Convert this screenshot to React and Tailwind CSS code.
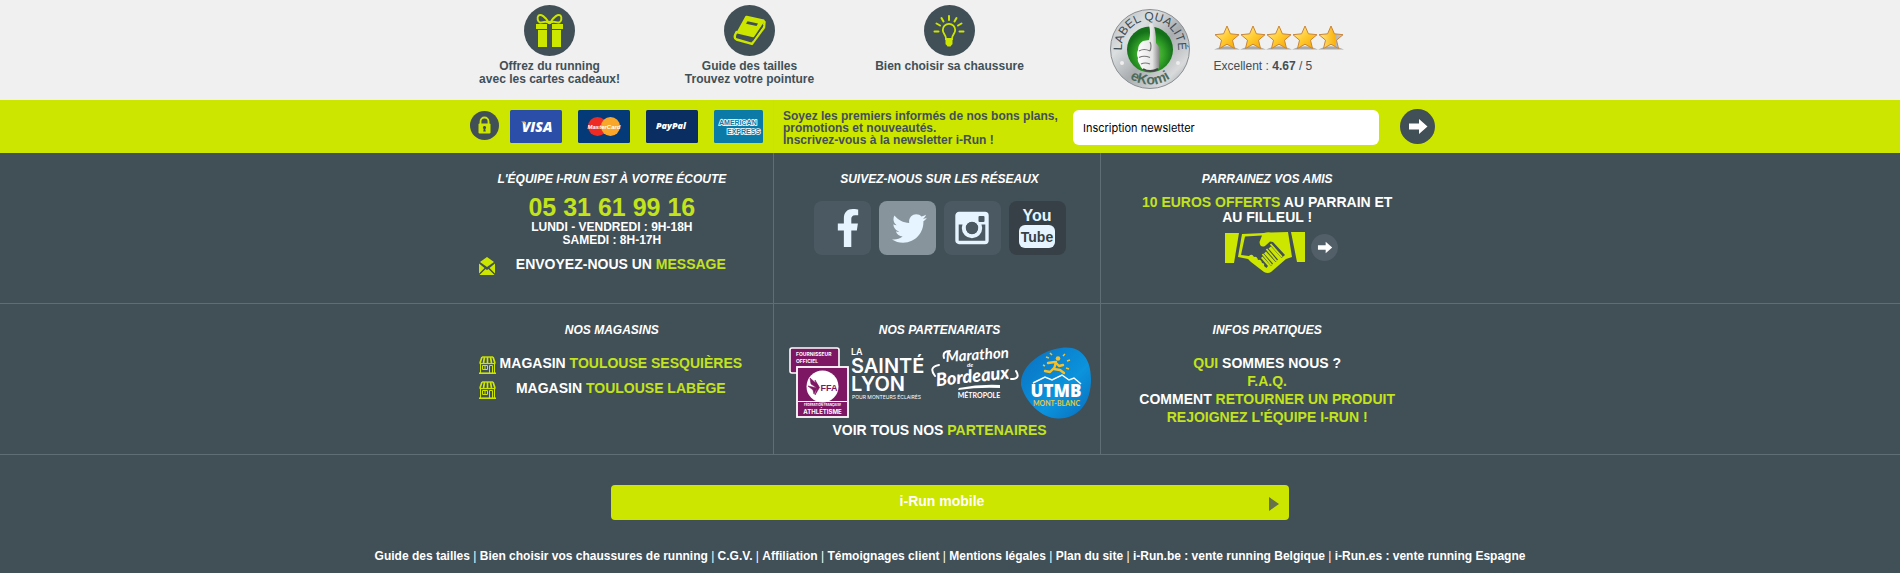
import React from "react";
import { FaFacebookF, FaTwitter } from "react-icons/fa";

const LIME = "#cde600";
const SLATE = "#414f57";

function GiftIcon() {
  return (
    <svg viewBox="0 0 51 51" className="size-[51px]" aria-hidden="true">
      <circle cx="25.500" cy="25.500" r="25.500" fill={SLATE} />
      <g fill={LIME}>
        <path d="M12 19h11v5H12zM28 19h11v5H28zM14 25h9v17h-9zM28 25h9v17h-9z" />
      </g>
      <g fill="none" stroke={LIME} strokeWidth="2" strokeLinejoin="round">
        <path d="M25 18C21 11 17 9 14.500 10.500C12.500 13 14 17 16 17.500C19 18 21 15 25 18Z" />
        <path d="M26 18C30 11 34 9 36.500 10.500C38.500 13 37 17 35 17.500C32 18 30 15 26 18Z" />
      </g>
      <circle cx="25.500" cy="17.500" r="1.800" fill={LIME} />
    </svg>
  );
}

function BookIcon() {
  return (
    <svg viewBox="0 0 51 51" className="size-[51px]" aria-hidden="true">
      <circle cx="25.500" cy="25.500" r="25.500" fill={SLATE} />
      <path d="M21.500 11Q22 10.500 23 10.800L40 14.500Q41 15 40.600 16L31 31.500Q30 32.500 29 32.300L12 28.300Z" fill={LIME} />
      <path d="M23.500 16.200L34 18.500L32.500 21L22 18.700Z" fill={SLATE} />
      <path d="M12.500 27Q9 33 12.500 34.500L28 38.800L40 22.500L40.500 17" fill="none" stroke={LIME} strokeWidth="2.400" strokeLinejoin="round" strokeLinecap="round" />
      <path d="M14 31.500L28.500 35.500L39 20" fill="none" stroke={SLATE} strokeWidth="1.400" />
    </svg>
  );
}

function BulbIcon() {
  return (
    <svg viewBox="0 0 51 51" className="size-[51px]" aria-hidden="true">
      <circle cx="25.500" cy="25.500" r="25.500" fill={SLATE} />
      <path d="M22 34C22 29 18.800 29 18.800 25A6.200 6.200 0 0 1 31.200 25C31.200 29 28 29 28 34Z" fill="none" stroke={LIME} strokeWidth="1.800" />
      <path d="M21.500 34h7v4.500q0 1-1 1.500l-1 1.500h-3l-1-1.500q-1-.5-1-1.500z" fill={LIME} />
      <path d="M25 11v4M17.500 13l2 3.500M32.500 13l-2 3.500M12.500 18.500l3.500 2M37.500 18.500l-3.500 2M10.500 26.500h4M35.500 26.500h4" stroke={LIME} strokeWidth="2" strokeLinecap="round" />
    </svg>
  );
}

function EkomiSeal() {
  return (
    <svg viewBox="0 0 80 80" className="size-20 shrink-0" role="img" aria-label="Label Qualité eKomi">
      <defs>
        <linearGradient id="sealRing" x1="0" y1="0" x2="1" y2="1">
          <stop offset="0" stopColor="#b3b7ba" />
          <stop offset=".3" stopColor="#dcdfe0" />
          <stop offset=".55" stopColor="#a9adb0" />
          <stop offset=".8" stopColor="#d8dadb" />
          <stop offset="1" stopColor="#8f9498" />
        </linearGradient>
        <radialGradient id="sealCore" cx=".5" cy=".6">
          <stop offset="0" stopColor="#7fd45c" />
          <stop offset=".65" stopColor="#2f9e25" />
          <stop offset="1" stopColor="#15701a" />
        </radialGradient>
        <linearGradient id="thumb" x1="0" x2="1">
          <stop offset="0" stopColor="#ffffff" />
          <stop offset=".7" stopColor="#e4e4e4" />
          <stop offset="1" stopColor="#8b8b8b" />
        </linearGradient>
        <path id="sealTop" d="M15 52A28 28 0 1 1 65 52" />
        <path id="sealBottom" d="M8 56A36 36 0 0 0 72 56" />
      </defs>
      <circle cx="40" cy="40" r="39.500" fill="url(#sealRing)" stroke="#8a8f92" strokeWidth="1" />
      <circle cx="40" cy="40.500" r="23" fill="url(#sealCore)" />
      <path d="M39 16Q40 13 43 15Q46 20 46 34L49 38V59Q44 63 38 62Q31 61 30 56Q27 52 28 49Q26 45 28 41Q28 35 33 32L39 31Q41 24 39 16Z" fill="url(#thumb)" />
      <path d="M29 42Q34 39 40 42M29 48.500Q34 46 40 48.500M31 55Q35 53 40 55M40 33Q42 37 40 42" fill="none" stroke="#777" strokeWidth="1.200" />
      <path d="M33 60Q40 64 48 60" stroke="#454545" strokeWidth="2" fill="none" />
      <text fontFamily="Liberation Sans, sans-serif" fontSize="12" fill="#3d4c54" textAnchor="middle">
        <textPath href="#sealTop" startOffset="50%">LABEL QUALITÉ</textPath>
      </text>
      <text fontFamily="Liberation Sans, sans-serif" fontWeight="700" fontSize="14" fill="#4c6b5c" textAnchor="middle">
        <textPath href="#sealBottom" startOffset="50%">eKomi</textPath>
      </text>
      <circle cx="12" cy="54" r="2" fill="#eee" />
      <circle cx="68" cy="54" r="2" fill="#eee" />
    </svg>
  );
}

const STAR = "M13 1L16.400 8.800L25 9.700L18.500 15.200L20.500 23.500L13 19.200L5.500 23.500L7.500 15.200L1 9.700L9.600 8.800Z";

function Stars() {
  return (
    <svg viewBox="0 0 130 25" className="h-[25px] w-[130px]" role="img" aria-label="4.67 sur 5">
      <defs>
        <linearGradient id="gold" x1="0" y1="0" x2="1" y2="1">
          <stop offset="0" stopColor="#fff0a8" />
          <stop offset=".5" stopColor="#ffcb2e" />
          <stop offset="1" stopColor="#f6a000" />
        </linearGradient>
        <linearGradient id="goldPart">
          <stop offset="0" stopColor="#ffe88a" />
          <stop offset=".66" stopColor="#fbb40c" />
          <stop offset=".67" stopColor="#b5b5b5" />
          <stop offset="1" stopColor="#c8c8c8" />
        </linearGradient>
      </defs>
      {[0, 1, 2, 3, 4].map((i) => (
        <g key={i} transform={`translate(${i * 26} 0)`}>
          <path d="M0 24.500Q13 18 26 24.500Z" fill="#a9a9a9" />
          <path d={STAR} fill={i === 4 ? "url(#goldPart)" : "url(#gold)"} stroke="#c9853a" strokeWidth="1" strokeLinejoin="round" />
        </g>
      ))}
    </svg>
  );
}

function ArrowDisc({ disc, className }) {
  return (
    <svg viewBox="0 0 35 35" className={className} aria-hidden="true">
      <circle cx="17.500" cy="17.500" r="17.500" fill={disc} />
      <path d="M9 14.500h10v-4.500l8.500 7.500l-8.500 7.500v-4.500H9z" fill="#fff" />
    </svg>
  );
}

function LockIcon() {
  return (
    <svg viewBox="0 0 29 29" className="mt-px size-[29px]" aria-hidden="true">
      <circle cx="14.500" cy="14.500" r="14.500" fill={SLATE} />
      <rect x="8.500" y="12.500" width="12" height="10" rx="1" fill={LIME} />
      <path d="M10.500 13v-2.500a4 4 0 0 1 8 0V13" fill="none" stroke={LIME} strokeWidth="1.800" />
      <path d="M14.500 15a1.600 1.600 0 0 1 .8 3l.5 2.500h-2.600l.5-2.500a1.600 1.600 0 0 1 .8-3z" fill={SLATE} />
    </svg>
  );
}

const logoFont = "Liberation Sans, sans-serif";

function PaymentLogos() {
  return (
    <div className="flex gap-4">
      <svg viewBox="0 0 52 33" className="h-[33px] w-[52px]" role="img" aria-label="Visa">
        <rect width="52" height="33" rx="1.500" fill="#2b4fa8" />
        <text x="27" y="22" textAnchor="middle" fontFamily="Open Sans, sans-serif" fontWeight="800" fontStyle="italic" fontSize="14" fill="#fff">VISA</text>
        <path d="M11 11.500h4l1.500 4.500Q14 12.500 11 11.500z" fill="#f5b95a" />
      </svg>
      <svg viewBox="0 0 52 33" className="h-[33px] w-[52px]" role="img" aria-label="MasterCard">
        <rect width="52" height="33" rx="1.500" fill="#053a78" />
        <circle cx="19.500" cy="16.500" r="9.500" fill="#ee2a24" />
        <circle cx="32.500" cy="16.500" r="9.500" fill="#f9a72b" />
        <text x="26" y="19" textAnchor="middle" fontFamily={logoFont} fontWeight="700" fontStyle="italic" fontSize="6" fill="#fff">MasterCard</text>
      </svg>
      <svg viewBox="0 0 52 33" className="h-[33px] w-[52px]" role="img" aria-label="PayPal">
        <rect width="52" height="33" rx="1.500" fill="#0a2d62" />
        <text x="25" y="19" textAnchor="middle" fontFamily="Open Sans, sans-serif" fontWeight="800" fontStyle="italic" fontSize="9" fill="#fff">PayPal</text>
      </svg>
      <svg viewBox="0 0 49 33" className="h-[33px] w-[49px]" role="img" aria-label="American Express">
        <rect width="49" height="33" rx="1.500" fill="#0b7aa6" />
        <g fontFamily={logoFont} fontWeight="700" fontSize="7" fill="#0b7aa6" stroke="#fff" strokeWidth="1.600" paintOrder="stroke">
          <text x="5" y="15">AMERICAN</text>
          <text x="13" y="24">EXPRESS</text>
        </g>
      </svg>
    </div>
  );
}

function EnvelopeIcon() {
  return (
    <svg viewBox="0 0 16 18" className="h-[18px] w-4" aria-hidden="true">
      <path d="M8 0L15 5L8 10L1 5Z" fill={LIME} />
      <path d="M0 6.500L5.500 11L0 16.500zM16 6.500L10.500 11L16 16.500zM.5 18L6.500 12L8 13L9.500 12L15.500 18z" fill={LIME} />
    </svg>
  );
}

function ShopIcon() {
  return (
    <svg viewBox="0 0 17 18" className="h-[18px] w-[17px]" aria-hidden="true" fill="none" stroke={LIME}>
      <path d="M3 1h11" strokeWidth="1.400" />
      <path d="M3 1L1 7M5.500 1L4.500 7M8.500 1V7M11.500 1L12.500 7M14 1L16 7" strokeWidth="1.700" />
      <path d="M.5 7.500h16" strokeWidth="1.200" />
      <path d="M1.500 8v9M15.500 8v9M3.500 9.500h5v4h-5zM6 9.500v4M10.500 17V9.500h3V17" strokeWidth="1" />
      <path d="M0 17.200h17" strokeWidth="1.600" />
    </svg>
  );
}

function HandshakeIcon() {
  return (
    <svg viewBox="0 0 80 41" className="h-[41px] w-20" aria-hidden="true">
      <path d="M0 1H14L9 31H0zM66 0H80V30H72Z" fill={LIME} />
      <path d="M17 2L39 1Q42 0 46 .5L63 0L67 25L61 27L46 40Q43 42 39 40L26 30L23 27L13 25Z" fill={LIME} />
      <path d="M20 4.500L37 3.500L34.500 10Q35 16 40 14L45 9.500L48 10L60 23L56.500 26L46 14.500L43.500 16.500L53 27.500L50.500 30L41 19.500L39 21.500L48 31.500L46 34L37.500 24.500L36 26L43 34L41.500 36L39 34Q40 31 37 31Q36 27 33 28Q32 24 29 25Q27 21 24 24L16 23Z" fill={SLATE} />
      <path d="M45.500 12L57 25M41.500 17L51.500 29M37.500 22L46.500 33" stroke={LIME} strokeWidth="1.800" />
    </svg>
  );
}

function InstagramIcon() {
  return (
    <svg viewBox="0 0 34 34" className="size-[34px]" aria-hidden="true">
      <rect x="2" y="2.500" width="30" height="29" rx="2" fill="none" stroke="#e6f4ff" strokeWidth="3.400" />
      <path d="M1 2.500h32v11h-9a8.500 8.500 0 0 0-14 0H1z" fill="#e6f4ff" />
      <circle cx="17" cy="17" r="8.200" fill="none" stroke="#e6f4ff" strokeWidth="4" />
      <circle cx="17" cy="17" r="6" fill="#4b5962" />
      <rect x="23.500" y="5" width="6" height="6" rx="1" fill="#4b5962" />
    </svg>
  );
}

function YoutubeIcon() {
  return (
    <svg viewBox="0 0 38 42" className="h-[42px] w-[38px]" aria-hidden="true">
      <rect x="1" y="18" width="36" height="23" rx="6" fill="#e6f4ff" />
      <g fontFamily={logoFont} fontWeight="700" textAnchor="middle">
        <text x="19" y="14" fontSize="16" fill="#e6f4ff">You</text>
        <text x="19" y="35" fontSize="14" fill="#364046">Tube</text>
      </g>
    </svg>
  );
}

function FfaLogo() {
  return (
    <svg viewBox="0 0 60 71" className="h-[71px] w-[60px]" role="img" aria-label="Fédération Française d'Athlétisme">
      <rect x="1" y="1" width="49" height="25" rx="2" fill="#7d1663" stroke="#fff" strokeWidth="1.600" />
      <g fontFamily="Inter, sans-serif" fontWeight="700" fontSize="5" fill="#fff">
        <text x="7" y="9">FOURNISSEUR</text>
        <text x="7" y="16">OFFICIEL</text>
      </g>
      <rect x="8" y="20" width="51" height="50" fill="#7d1663" stroke="#fff" strokeWidth="1.800" />
      <circle cx="33.500" cy="39.500" r="16" fill="#fff" />
      <path d="M21 31L29 38L28 41L22 37zM19 39L28 41L25 47L24 43zM26 33L30.500 40.500L26 48L28 41z" fill="#7d1663" stroke="#7d1663" strokeWidth=".6" />
      <text x="40" y="44" textAnchor="middle" fontFamily={logoFont} fontWeight="700" fontSize="9" fill="#7d1663">FFA</text>
      <path d="M9 54.500h49" stroke="#fff" strokeWidth="1" />
      <g fontFamily="Inter, sans-serif" fontWeight="700" fill="#fff" textAnchor="middle">
        <text x="33.500" y="59" fontSize="3">FÉDÉRATION FRANÇAISE</text>
        <text x="33.500" y="67" fontSize="6">ATHLÉTISME</text>
      </g>
    </svg>
  );
}

function SainteLyonLogo() {
  return (
    <svg viewBox="0 0 78 54" className="h-[54px] w-[78px] overflow-visible" role="img" aria-label="La SaintéLyon">
      <g fontFamily="Inter, sans-serif" fontWeight="600" fill="#fff">
        <text x="0" y="8" fontSize="9">LA</text>
        <text x="0" y="26" fontSize="20">SAINTÉ</text>
        <text x="0" y="44" fontSize="20">LYON</text>
        <text x="1" y="52" fontSize="5" fontWeight="400">POUR MONTEURS ÉCLAIRÉS</text>
      </g>
    </svg>
  );
}

function BordeauxLogo() {
  return (
    <svg viewBox="0 0 88 52" className="h-[52px] w-[88px] overflow-visible" role="img" aria-label="Marathon de Bordeaux Métropole">
      <g fontFamily="Lato, sans-serif" fontWeight="700" fontStyle="italic" fill="#fff">
        <text x="15" y="13" fontSize="15" transform="rotate(-4 45 13)">Marathon</text>
        <text x="36" y="20" fontSize="6">de</text>
        <text x="5" y="35" fontSize="18" fontWeight="900" transform="rotate(-6 45 32)">Bordeaux</text>
      </g>
      <path d="M4 29Q-3 20 8 18M13 11Q11 4 19 4M80 32Q90 32 85 24" fill="none" stroke="#fff" strokeWidth="2" strokeLinecap="round" />
      <path d="M28 41Q48 37 69 38V41Q48 40 27 43Z" fill="#fff" />
      <text x="48" y="51" textAnchor="middle" fontFamily="Lato, sans-serif" fontWeight="700" fontSize="7" fill="#fff">MÉTROPOLE</text>
    </svg>
  );
}

function UtmbLogo() {
  return (
    <svg viewBox="0 0 70 72" className="h-[72px] w-[70px]" role="img" aria-label="UTMB Mont-Blanc">
      <defs>
        <linearGradient id="utmb" x1="0" x2="1" y1="0" y2="1">
          <stop offset="0" stopColor="#0a6fc0" />
          <stop offset=".6" stopColor="#0b93dc" />
          <stop offset="1" stopColor="#0a6cbb" />
        </linearGradient>
      </defs>
      <path d="M40 1C60-2 70 12 70 32C70 56 58 71 38 71.500C20 72 4 54 0 38C-1 18 22 3 40 1Z" fill="url(#utmb)" />
      <path d="M12 36L24 30L31 33L41 28L48 33L53 31L60 37" fill="none" stroke="#fff" strokeWidth="1.500" />
      <circle cx="37" cy="11.500" r="2.300" fill="#f5c02c" />
      <path d="M27 16L34 15L38 19L42 18M35 15L33 22L39 23L43 26M33 21L29 25L24 24" fill="none" stroke="#f5c02c" strokeWidth="2.400" strokeLinecap="round" strokeLinejoin="round" />
      <path d="M25 10l3 1M29 6l2 2M46 14l3-1M45 21l3 1M22 18l2 1M42 9l2-2" stroke="#f5c02c" strokeWidth="1.500" />
      <text x="35" y="50" textAnchor="middle" fontFamily="Open Sans, sans-serif" fontWeight="800" fontSize="17" fill="#fff">UTMB</text>
      <text x="35.500" y="59" textAnchor="middle" fontFamily="Lato, sans-serif" fontWeight="700" fontSize="7" fill="#e3c93e">MONT-BLANC</text>
    </svg>
  );
}

function Lime({ children }) {
  return <span className="text-[#c3e31c]">{children}</span>;
}

function Panel({ title, divided = true, children }) {
  return (
    <section className={divided ? "flex-1 border-r border-[#5f6d75] pt-[19px] pl-[5px]" : "flex-1 pt-[19px] pl-[5px]"}>
      <h2 className="text-center text-xs leading-[14px] font-bold italic">{title}</h2>
      {children}
    </section>
  );
}

function IconLink({ icon, children }) {
  return (
    <a href="#" className="flex items-start pr-[30px] pl-7">
      <span className="mt-px w-5 shrink-0">{icon}</span>
      <span className="flex-1 text-center whitespace-nowrap">{children}</span>
    </a>
  );
}

const services = [
  { icon: <GiftIcon />, lines: ["Offrez du running", "avec les cartes cadeaux!"] },
  { icon: <BookIcon />, lines: ["Guide des tailles", "Trouvez votre pointure"] },
  { icon: <BulbIcon />, lines: ["Bien choisir sa chaussure"] },
];

const footerLinks = [
  "Guide des tailles",
  "Bien choisir vos chaussures de running",
  "C.G.V.",
  "Affiliation",
  "Témoignages client",
  "Mentions légales",
  "Plan du site",
  "i-Run.be : vente running Belgique",
  "i-Run.es : vente running Espagne",
];

const tile = "flex h-[54px] w-[57px] items-center justify-center rounded-lg text-[#e6f4ff]";

export default function App() {
  return (
    <footer className="min-h-screen bg-[#414f57] font-['Liberation_Sans',Arial,sans-serif] text-white">
      <div className="bg-[#f0f0f0] text-[#414f57]">
        <div className="mx-auto flex h-[100px] max-w-[1001px]">
          {services.map((s) => (
            <a key={s.lines[0]} href="#" className="flex w-[200px] flex-col items-center pt-[5px] text-center text-xs leading-[13px] font-bold">
              {s.icon}
              <span className="mt-1">
                {s.lines.map((l) => (
                  <span key={l} className="block">{l}</span>
                ))}
              </span>
            </a>
          ))}
          <div className="flex gap-6 pt-[9px] pl-[60px]">
            <EkomiSeal />
            <div className="pt-4">
              <Stars />
              <p className="mt-2 text-xs leading-4">Excellent : <b>4.67</b> / 5</p>
            </div>
          </div>
        </div>
      </div>

      <div className="bg-[#cde600]">
        <div className="mx-auto flex h-[53px] max-w-[1008px]">
          <div className="flex w-[328px] gap-[11px] border-r border-[#c6d84a] pt-2.5 pl-6">
            <LockIcon />
            <PaymentLogos />
          </div>
          <form className="flex flex-1 items-start" onSubmit={(e) => e.preventDefault()}>
            <label htmlFor="newsletter" className="w-[299px] pt-2.5 pl-[9px] text-xs leading-3 font-bold whitespace-nowrap text-[#414f57]">
              Soyez les premiers informés de nos bons plans,<br />
              promotions et nouveautés.<br />
              Inscrivez-vous à la newsletter i-Run !
            </label>
            <input
              id="newsletter"
              type="text"
              placeholder="Inscription newsletter"
              className="mt-2.5 h-[35px] w-[306px] rounded-md bg-white px-2.5 font-['Inter',sans-serif] text-[11px] text-black placeholder:text-black"
            />
            <button type="submit" aria-label="S'inscrire" className="mt-[9px] ml-[21px]">
              <ArrowDisc disc={SLATE} className="size-[35px]" />
            </button>
          </form>
        </div>
      </div>

      <div className="border-b border-[#5f6d75]">
        <div className="mx-auto flex min-h-[150px] max-w-[1008px] pr-[26px]">
          <Panel title="L'ÉQUIPE I-RUN EST À VOTRE ÉCOUTE">
            <p className="mt-[7px] text-center text-[25px] leading-7 font-bold"><Lime>05 31 61 99 16</Lime></p>
            <p className="text-center text-xs leading-[13px] font-bold">LUNDI - VENDREDI : 9H-18H<br />SAMEDI : 8H-17H</p>
            <div className="mt-[9px] text-sm leading-4 font-bold">
              <IconLink icon={<EnvelopeIcon />}>ENVOYEZ-NOUS UN <Lime>MESSAGE</Lime></IconLink>
            </div>
          </Panel>
          <Panel title="SUIVEZ-NOUS SUR LES RÉSEAUX">
            <div className="mt-[15px] flex justify-center gap-2">
              <a href="#" aria-label="Facebook" className={`${tile} bg-[#4b5962]`}><FaFacebookF className="ml-3 size-[38px]" /></a>
              <a href="#" aria-label="Twitter" className={`${tile} bg-[#87949c]`}><FaTwitter className="ml-1 size-[35px]" /></a>
              <a href="#" aria-label="Instagram" className={`${tile} bg-[#4b5962]`}><InstagramIcon /></a>
              <a href="#" aria-label="YouTube" className={`${tile} bg-[#364046]`}><YoutubeIcon /></a>
            </div>
          </Panel>
          <Panel title="PARRAINEZ VOS AMIS" divided={false}>
            <a href="#" className="block">
              <p className="mt-[9px] text-center text-sm leading-[15px] font-bold"><Lime>10 EUROS OFFERTS</Lime> AU PARRAIN ET<br />AU FILLEUL !</p>
              <div className="mt-[7px] flex justify-center gap-1.5 pl-7">
                <HandshakeIcon />
                <ArrowDisc disc="#525e68" className="mt-0.5 size-[27px]" />
              </div>
            </a>
          </Panel>
        </div>
      </div>

      <div className="border-b border-[#5f6d75]">
        <div className="mx-auto flex min-h-[150px] max-w-[1008px] pr-[26px]">
          <Panel title="NOS MAGASINS">
            <div className="mt-[18px] flex flex-col gap-[6px] text-sm leading-4 font-bold">
              <IconLink icon={<ShopIcon />}>MAGASIN <Lime>TOULOUSE SESQUIÈRES</Lime></IconLink>
              <IconLink icon={<ShopIcon />}>MAGASIN <Lime>TOULOUSE LABÈGE</Lime></IconLink>
            </div>
          </Panel>
          <Panel title="NOS PARTENARIATS">
            <div className="mt-2.5 flex justify-center gap-0.5">
              <FfaLogo />
              <SainteLyonLogo />
              <BordeauxLogo />
              <UtmbLogo />
            </div>
            <a href="#" className="mt-[3px] block text-center text-sm leading-4 font-bold">VOIR TOUS NOS <Lime>PARTENAIRES</Lime></a>
          </Panel>
          <Panel title="INFOS PRATIQUES" divided={false}>
            <ul className="mt-[17px] text-center text-sm leading-[18px] font-bold">
              <li><a href="#"><Lime>QUI</Lime> SOMMES NOUS ?</a></li>
              <li><a href="#"><Lime>F.A.Q.</Lime></a></li>
              <li><a href="#">COMMENT <Lime>RETOURNER UN PRODUIT</Lime></a></li>
              <li><a href="#"><Lime>REJOIGNEZ L'ÉQUIPE I-RUN !</Lime></a></li>
            </ul>
          </Panel>
        </div>
      </div>

      <div className="pt-[30px]">
        <a href="#" className="mx-auto flex h-[35px] max-w-[678px] rounded bg-[#cde600] pr-2.5 pl-1 text-sm leading-8 font-bold">
          <span className="flex-1 text-center">i-Run mobile</span>
          <svg viewBox="0 0 10 14" className="mt-3 h-3.5 w-2.5" aria-hidden="true">
            <path d="M0 0L10 7L0 14Z" fill="#66724a" />
          </svg>
        </a>
        <nav className="mt-7 text-center text-xs leading-4 font-bold">
          {footerLinks.map((label, i) => (
            <React.Fragment key={label}>
              {i > 0 && <span className="font-normal"> | </span>}
              <a href="#">{label}</a>
            </React.Fragment>
          ))}
        </nav>
      </div>
    </footer>
  );
}
